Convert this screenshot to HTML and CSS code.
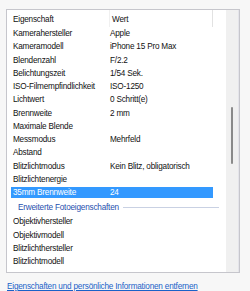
FILE: index.html
```html
<!DOCTYPE html>
<html lang="de">
<head>
    <meta charset="UTF-8">
    <title>Details</title>
    <link rel="stylesheet" href="styles.css">
</head>
<body>
    <!-- Eigenschaftenliste -->
    <div class="panel">
        <div class="list">
            <div class="row head">
                <span class="name">Eigenschaft</span>
                <span class="value">Wert</span>
            </div>
            <div class="row"><span class="name">Kamerahersteller</span><span class="value">Apple</span></div>
            <div class="row"><span class="name">Kameramodell</span><span class="value">iPhone 15 Pro Max</span></div>
            <div class="row"><span class="name">Blendenzahl</span><span class="value">F/2.2</span></div>
            <div class="row"><span class="name">Belichtungszeit</span><span class="value">1/54 Sek.</span></div>
            <div class="row"><span class="name">ISO-Filmempfindlichkeit</span><span class="value">ISO-1250</span></div>
            <div class="row"><span class="name">Lichtwert</span><span class="value">0 Schritt(e)</span></div>
            <div class="row"><span class="name">Brennweite</span><span class="value">2 mm</span></div>
            <div class="row"><span class="name">Maximale Blende</span><span class="value"></span></div>
            <div class="row"><span class="name">Messmodus</span><span class="value">Mehrfeld</span></div>
            <div class="row"><span class="name">Abstand</span><span class="value"></span></div>
            <div class="row"><span class="name">Blitzlichtmodus</span><span class="value">Kein Blitz, obligatorisch</span></div>
            <div class="row"><span class="name">Blitzlichtenergie</span><span class="value"></span></div>
            <div class="row selected"><span class="name">35mm Brennweite</span><span class="value">24</span></div>

            <div class="group">
                <span>Erweiterte Fotoeigenschaften</span>
                <div class="group-line"></div>
            </div>
            <div class="row"><span class="name">Objektivhersteller</span><span class="value"></span></div>
            <div class="row"><span class="name">Objektivmodell</span><span class="value"></span></div>
            <div class="row"><span class="name">Blitzlichthersteller</span><span class="value"></span></div>
            <div class="row"><span class="name">Blitzlichtmodell</span><span class="value"></span></div>
        </div>
        <div class="scrollbar">
            <div class="thumb"></div>
        </div>
    </div>

    <a href="#" class="remove-link">Eigenschaften und persönliche Informationen entfernen</a>
</body>
</html>
```

FILE: styles.css
```css
body {
    margin: 0;
    background-color: #f7f7f7;
    font-family: "Liberation Sans", Arial, sans-serif;
    font-size: 8.2px;
    letter-spacing: -0.2px;
    color: #111;
}
.panel {
    display: flex;
    margin: 9px 0 0 6px;
    width: 232px;
    height: 262px;
    background-color: #fff;
    border: 1px solid #c6c6cc;
}
.list {
    flex: 1;
    padding-left: 4px;
}
.row {
    display: flex;
    align-items: center;
    height: 13.25px;
    width: 202px;
    white-space: nowrap;
}
.row .name {
    width: 97px;
    padding-left: 2px;
}
.row .value {
    flex: 1;
}
.row.head {
    height: 17px;
}
.row.head .name {
    border-right: 1px solid #f0f0f0;
    height: 17px;
    line-height: 19px;
    width: 96px;
}
.row.head .value {
    height: 17px;
    line-height: 19px;
    padding-left: 2px;
    border-right: 1px solid #e2e2e2;
}
/* Ausgewaehlte Zeile */
.row.selected {
    background-color: #3399ff;
    background-clip: content-box;
    padding: 1px 0;
    height: 11.25px;
    color: #fff;
}
.group {
    display: flex;
    align-items: center;
    height: 16px;
    padding-left: 7px;
    width: 201px;
    color: #1f4fae;
    white-space: nowrap;
}
.group-line {
    flex: 1;
    height: 1px;
    margin-left: 4px;
    background-color: #c9d1e3;
}
.scrollbar {
    width: 12px;
    background-color: #f0f0f0;
    border-right: 1px solid #e4e4ea;
    position: relative;
}
.thumb {
    position: absolute;
    left: 5px;
    top: 97px;
    width: 2px;
    height: 57px;
    border-radius: 1px;
    background-color: #8a8a8a;
}
.remove-link {
    display: block;
    margin: 9px 0 0 7px;
    color: #1a62c8;
    text-decoration: underline;
}
```
